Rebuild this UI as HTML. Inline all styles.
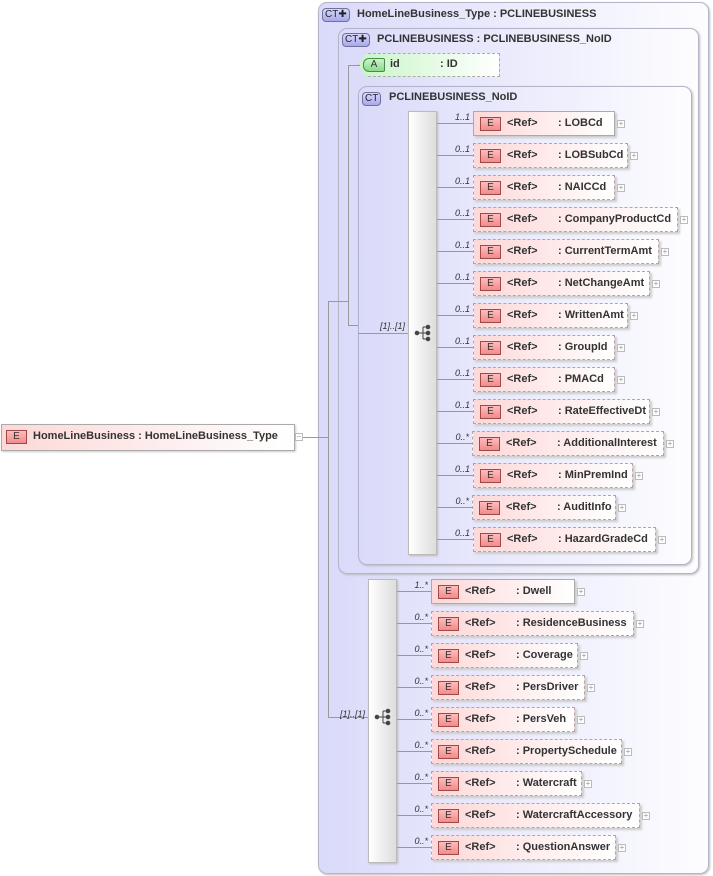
<!DOCTYPE html>
<html><head><meta charset="utf-8"><style>
*{margin:0;padding:0;box-sizing:border-box}
body{width:713px;height:876px;background:#fff;position:relative;overflow:hidden;font-family:"Liberation Sans",sans-serif;font-size:11px;font-weight:bold;color:#333}
div,span{position:absolute}
.box{border:1px solid #b4b4c8;border-radius:9px;background:linear-gradient(90deg,#d8d8fa,#fcfcff)}
.box2{border:1px solid #b4b4c8;border-radius:9px;background:linear-gradient(90deg,#dadafa,#fdfdff);box-shadow:1px 1px 2px #bbb}
.ct{border:1px solid #7070a0;border-radius:4px;background:linear-gradient(#d8d8ff,#a8a8e8);font-size:10px;font-weight:normal;color:#222;height:14px;line-height:12px;padding:0 2px}
.el{height:25px;border:1px solid #aaa;background:linear-gradient(90deg,#fdd8d8,#fff);box-shadow:2px 2px 2px #ccc;white-space:nowrap}
.d{border:1px dashed #aaa}
.e{left:6px;top:5px;width:21px;height:14px;border:1px solid #a04848;background:linear-gradient(#fbb,#f08c8c);font-size:10px;font-weight:normal;text-align:center;line-height:12px;color:#333}
.r{left:33px;top:5px}
.n{left:84px;top:5px}
.pl{width:8px;height:8px;border:1px solid #bbb;background:#fff;font-size:8px;line-height:6px;text-align:center;color:#999;font-weight:normal}
.c{width:30px;text-align:right;font-size:9px;font-style:italic;font-weight:normal;color:#333}
.h{height:1px;background:#999}
.v{width:1px;background:#999}
.seq{background:linear-gradient(90deg,#fff,#ddd);border:1px solid #bbb;box-shadow:1px 1px 2px #bbb}
</style></head><body>

<div class="box2" style="left:318px;top:2px;width:391px;height:872px"></div>
<div class="ct" style="left:322px;top:8px">CT✚</div>
<div style="left:357px;top:8px">HomeLineBusiness_Type : PCLINEBUSINESS</div>

<div class="box2" style="left:338px;top:28px;width:361px;height:546px"></div>
<div class="ct" style="left:342px;top:33px">CT✚</div>
<div style="left:377px;top:33px">PCLINEBUSINESS : PCLINEBUSINESS_NoID</div>

<div style="left:358px;top:53px;width:142px;height:24px;border:1px dashed #aaa;background:linear-gradient(90deg,#c8f5c8,#fff);clip-path:polygon(8px 0,100% 0,100% 100%,8px 100%,0 50%)"></div>
<div style="left:363px;top:58px;width:22px;height:14px;border:1px solid #4a8a4a;border-radius:6px 2px 2px 6px;background:linear-gradient(#c8f7c8,#8cd88c);font-size:10px;font-weight:normal;text-align:center;line-height:12px">A</div>
<div style="left:390px;top:58px">id</div>
<div style="left:440px;top:58px">: ID</div>

<div class="box2" style="left:358px;top:86px;width:334px;height:479px"></div>
<div class="ct" style="left:362px;top:92px">CT</div>
<div style="left:389px;top:91px">PCLINEBUSINESS_NoID</div>

<!-- connectors -->
<div class="h" style="left:303px;top:437px;width:25px"></div>
<div class="v" style="left:328px;top:301px;height:416px"></div>
<div class="h" style="left:328px;top:301px;width:20px"></div>
<div class="v" style="left:348px;top:65px;height:260px"></div>
<div class="h" style="left:348px;top:65px;width:12px"></div>
<div class="h" style="left:348px;top:325px;width:10px"></div>
<div class="h" style="left:358px;top:333px;width:50px"></div>
<div class="c" style="left:375px;top:321px">[1]..[1]</div>
<div class="h" style="left:328px;top:717px;width:40px"></div>
<div class="c" style="left:335px;top:709px">[1]..[1]</div>

<div style="left:1px;top:424px;width:294px;height:27px;border:1px solid #aaa;background:linear-gradient(90deg,#fdd8d8,#fff);box-shadow:1px 1px 2px #ccc"></div>
<div class="e" style="left:6px;top:430px">E</div>
<div style="left:33px;top:430px">HomeLineBusiness : HomeLineBusiness_Type</div>
<div class="pl" style="left:295px;top:433px">−</div>

<div class="seq" style="left:408px;top:111px;width:29px;height:444px"></div>
<div class="seq" style="left:368px;top:579px;width:29px;height:284px"></div>

<svg style="position:absolute;left:414px;top:324px" width="20" height="18"><g fill="#444" stroke="#444"><circle cx="3" cy="9" r="1.8"/><circle cx="14" cy="3" r="1.8"/><circle cx="14" cy="9" r="1.8"/><circle cx="14" cy="15" r="1.8"/><path d="M3 9H9M9 3V15M9 3H14M9 9H14M9 15H14" fill="none" stroke-width="1"/></g></svg>
<svg style="position:absolute;left:374px;top:708px" width="20" height="18"><g fill="#444" stroke="#444"><circle cx="3" cy="9" r="1.8"/><circle cx="14" cy="3" r="1.8"/><circle cx="14" cy="9" r="1.8"/><circle cx="14" cy="15" r="1.8"/><path d="M3 9H9M9 3V15M9 3H14M9 9H14M9 15H14" fill="none" stroke-width="1"/></g></svg>

<!-- seq1 rows -->
<div class="h" style="left:437px;top:123px;width:36px"></div><div class="c" style="left:440px;top:112px">1..1</div><div class="el" style="left:473px;top:111px;width:142px"><span class="e">E</span><span class="r">&lt;Ref&gt;</span><span class="n">: LOBCd</span></div><div class="pl" style="left:617px;top:120px">+</div>
<div class="h" style="left:437px;top:155px;width:36px"></div><div class="c" style="left:440px;top:144px">0..1</div><div class="el d" style="left:473px;top:143px;width:155px"><span class="e">E</span><span class="r">&lt;Ref&gt;</span><span class="n">: LOBSubCd</span></div><div class="pl" style="left:630px;top:152px">+</div>
<div class="h" style="left:437px;top:187px;width:36px"></div><div class="c" style="left:440px;top:176px">0..1</div><div class="el d" style="left:473px;top:175px;width:142px"><span class="e">E</span><span class="r">&lt;Ref&gt;</span><span class="n">: NAICCd</span></div><div class="pl" style="left:617px;top:184px">+</div>
<div class="h" style="left:437px;top:219px;width:36px"></div><div class="c" style="left:440px;top:208px">0..1</div><div class="el d" style="left:473px;top:207px;width:205px"><span class="e">E</span><span class="r">&lt;Ref&gt;</span><span class="n">: CompanyProductCd</span></div><div class="pl" style="left:680px;top:216px">+</div>
<div class="h" style="left:437px;top:251px;width:36px"></div><div class="c" style="left:440px;top:240px">0..1</div><div class="el d" style="left:473px;top:239px;width:186px"><span class="e">E</span><span class="r">&lt;Ref&gt;</span><span class="n">: CurrentTermAmt</span></div><div class="pl" style="left:661px;top:248px">+</div>
<div class="h" style="left:437px;top:283px;width:36px"></div><div class="c" style="left:440px;top:272px">0..1</div><div class="el d" style="left:473px;top:271px;width:177px"><span class="e">E</span><span class="r">&lt;Ref&gt;</span><span class="n">: NetChangeAmt</span></div><div class="pl" style="left:652px;top:280px">+</div>
<div class="h" style="left:437px;top:315px;width:36px"></div><div class="c" style="left:440px;top:304px">0..1</div><div class="el d" style="left:473px;top:303px;width:155px"><span class="e">E</span><span class="r">&lt;Ref&gt;</span><span class="n">: WrittenAmt</span></div><div class="pl" style="left:630px;top:312px">+</div>
<div class="h" style="left:437px;top:347px;width:36px"></div><div class="c" style="left:440px;top:336px">0..1</div><div class="el d" style="left:473px;top:335px;width:142px"><span class="e">E</span><span class="r">&lt;Ref&gt;</span><span class="n">: GroupId</span></div><div class="pl" style="left:617px;top:344px">+</div>
<div class="h" style="left:437px;top:379px;width:36px"></div><div class="c" style="left:440px;top:368px">0..1</div><div class="el d" style="left:473px;top:367px;width:142px"><span class="e">E</span><span class="r">&lt;Ref&gt;</span><span class="n">: PMACd</span></div><div class="pl" style="left:617px;top:376px">+</div>
<div class="h" style="left:437px;top:411px;width:36px"></div><div class="c" style="left:440px;top:400px">0..1</div><div class="el d" style="left:473px;top:399px;width:177px"><span class="e">E</span><span class="r">&lt;Ref&gt;</span><span class="n">: RateEffectiveDt</span></div><div class="pl" style="left:652px;top:408px">+</div>
<div class="h" style="left:437px;top:443px;width:35px"></div><div class="c" style="left:439px;top:432px">0..*</div><div class="el d" style="left:472px;top:431px;width:192px"><span class="e">E</span><span class="r">&lt;Ref&gt;</span><span class="n">: AdditionalInterest</span></div><div class="pl" style="left:666px;top:440px">+</div>
<div class="h" style="left:437px;top:475px;width:36px"></div><div class="c" style="left:440px;top:464px">0..1</div><div class="el d" style="left:473px;top:463px;width:160px"><span class="e">E</span><span class="r">&lt;Ref&gt;</span><span class="n">: MinPremInd</span></div><div class="pl" style="left:635px;top:472px">+</div>
<div class="h" style="left:437px;top:507px;width:35px"></div><div class="c" style="left:439px;top:496px">0..*</div><div class="el d" style="left:472px;top:495px;width:144px"><span class="e">E</span><span class="r">&lt;Ref&gt;</span><span class="n">: AuditInfo</span></div><div class="pl" style="left:618px;top:504px">+</div>
<div class="h" style="left:437px;top:539px;width:36px"></div><div class="c" style="left:440px;top:528px">0..1</div><div class="el d" style="left:473px;top:527px;width:183px"><span class="e">E</span><span class="r">&lt;Ref&gt;</span><span class="n">: HazardGradeCd</span></div><div class="pl" style="left:658px;top:536px">+</div>

<!-- seq2 rows -->
<div class="h" style="left:397px;top:591px;width:34px"></div><div class="c" style="left:398px;top:580px">1..*</div><div class="el" style="left:431px;top:579px;width:144px"><span class="e">E</span><span class="r">&lt;Ref&gt;</span><span class="n">: Dwell</span></div><div class="pl" style="left:577px;top:588px">+</div>
<div class="h" style="left:397px;top:623px;width:34px"></div><div class="c" style="left:398px;top:612px">0..*</div><div class="el d" style="left:431px;top:611px;width:203px"><span class="e">E</span><span class="r">&lt;Ref&gt;</span><span class="n">: ResidenceBusiness</span></div><div class="pl" style="left:636px;top:620px">+</div>
<div class="h" style="left:397px;top:655px;width:34px"></div><div class="c" style="left:398px;top:644px">0..*</div><div class="el d" style="left:431px;top:643px;width:147px"><span class="e">E</span><span class="r">&lt;Ref&gt;</span><span class="n">: Coverage</span></div><div class="pl" style="left:580px;top:652px">+</div>
<div class="h" style="left:397px;top:687px;width:34px"></div><div class="c" style="left:398px;top:676px">0..*</div><div class="el d" style="left:431px;top:675px;width:154px"><span class="e">E</span><span class="r">&lt;Ref&gt;</span><span class="n">: PersDriver</span></div><div class="pl" style="left:587px;top:684px">+</div>
<div class="h" style="left:397px;top:719px;width:34px"></div><div class="c" style="left:398px;top:708px">0..*</div><div class="el d" style="left:431px;top:707px;width:144px"><span class="e">E</span><span class="r">&lt;Ref&gt;</span><span class="n">: PersVeh</span></div><div class="pl" style="left:577px;top:716px">+</div>
<div class="h" style="left:397px;top:751px;width:34px"></div><div class="c" style="left:398px;top:740px">0..*</div><div class="el d" style="left:431px;top:739px;width:191px"><span class="e">E</span><span class="r">&lt;Ref&gt;</span><span class="n">: PropertySchedule</span></div><div class="pl" style="left:624px;top:748px">+</div>
<div class="h" style="left:397px;top:783px;width:34px"></div><div class="c" style="left:398px;top:772px">0..*</div><div class="el d" style="left:431px;top:771px;width:151px"><span class="e">E</span><span class="r">&lt;Ref&gt;</span><span class="n">: Watercraft</span></div><div class="pl" style="left:584px;top:780px">+</div>
<div class="h" style="left:397px;top:815px;width:34px"></div><div class="c" style="left:398px;top:804px">0..*</div><div class="el d" style="left:431px;top:803px;width:209px"><span class="e">E</span><span class="r">&lt;Ref&gt;</span><span class="n">: WatercraftAccessory</span></div><div class="pl" style="left:642px;top:812px">+</div>
<div class="h" style="left:397px;top:847px;width:34px"></div><div class="c" style="left:398px;top:836px">0..*</div><div class="el d" style="left:431px;top:835px;width:185px"><span class="e">E</span><span class="r">&lt;Ref&gt;</span><span class="n">: QuestionAnswer</span></div><div class="pl" style="left:618px;top:844px">+</div>

</body></html>
